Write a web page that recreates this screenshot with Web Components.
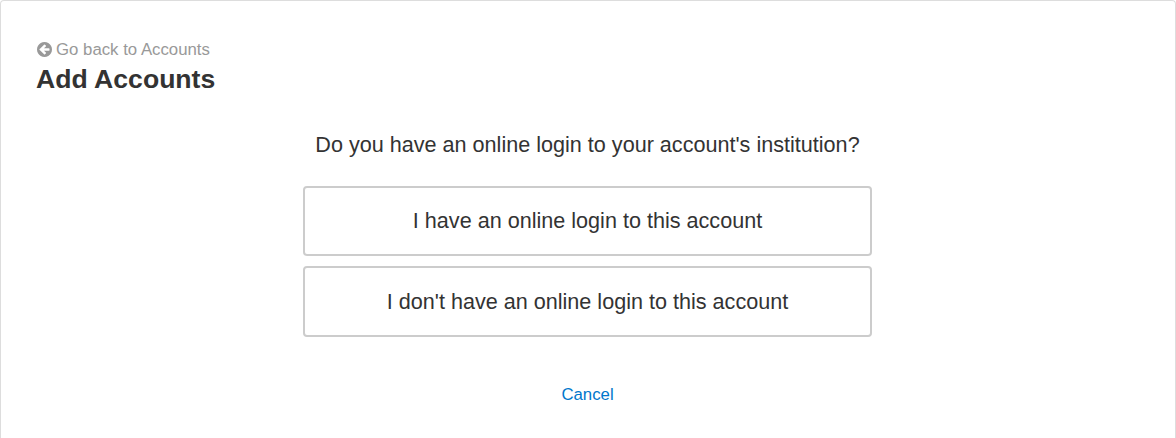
<!DOCTYPE html>
<html>
<head>
<meta charset="utf-8">
<title>Add Accounts</title>
<style>
  html, body { margin: 0; padding: 0; background: #fff; }
  body { font-family: "Liberation Sans", Arial, sans-serif; color: #333; height: 438px; overflow: hidden; }
</style>
</head>
<body>
<add-accounts-card>
  <back-link slot="header">Go back to Accounts</back-link>
  <span slot="title">Add Accounts</span>
  <span slot="question">Do you have an online login to your account's institution?</span>
  <choice-button>I have an online login to this account</choice-button>
  <choice-button>I don't have an online login to this account</choice-button>
  <span slot="cancel">Cancel</span>
</add-accounts-card>

<script>
  class BackLink extends HTMLElement {
    constructor() {
      super();
      this.attachShadow({ mode: 'open' });
      this.shadowRoot.innerHTML = `
        <style>
          :host { display: flex; align-items: center; gap: 4px; height: 18px; padding-left: 1px; font-size: 16.8px; color: #999; }
          svg { width: 15px; height: 15px; display: block; margin-bottom: 1px; }
        </style>
        <svg viewBox="128 128 1536 1536"><path fill="#999" d="M1408 960v-128q0-26-19-45t-45-19h-502l189-189q19-19 19-45t-19-45l-91-91q-18-18-45-18t-45 18l-362 362-91 91q-18 18-18 45t18 45l91 91 362 362q18 18 45 18t45-18l91-91q18-18 18-45t-18-45l-189-189h502q26 0 45-19t19-45zm256-64q0 209-103 385.500t-279.500 279.500-385.500 103-385.500-103-279.500-279.500-103-385.500 103-385.500 279.500-279.500 385.500-103 385.500 103 279.500 279.500 103 385.500z"/></svg>
        <slot></slot>
      `;
    }
  }
  customElements.define('back-link', BackLink);

  class ChoiceButton extends HTMLElement {
    constructor() {
      super();
      this.attachShadow({ mode: 'open' });
      this.shadowRoot.innerHTML = `
        <style>
          :host { display: flex; align-items: center; justify-content: center; box-sizing: border-box; height: 70.4px;
                  border: 2px solid #ccc; border-radius: 4px; background: #fff; font-size: 21.6px; color: #333; cursor: pointer; }
        </style>
        <slot></slot>
      `;
    }
  }
  customElements.define('choice-button', ChoiceButton);

  class AddAccountsCard extends HTMLElement {
    constructor() {
      super();
      this.attachShadow({ mode: 'open' });
      this.shadowRoot.innerHTML = `
        <style>
          :host { display: block; box-sizing: border-box; height: 438px; border: 1px solid #ddd; border-bottom: 0;
                  border-radius: 4px 4px 0 0; padding: 40px 36px 0 35px; background: #fff; }
          .title { font-size: 26.6px; font-weight: bold; line-height: 30px; margin-top: 5px; color: #333; }
          .question { font-size: 21.6px; line-height: 26px; text-align: center; margin-top: 38px; }
          .choices { width: 569px; margin: 28px auto 0; display: flex; flex-direction: column; gap: 10px; }
          .cancel { text-align: center; margin-top: 48px; font-size: 16.8px; line-height: 20px; color: #0077cc; }
        </style>
        <slot name="header"></slot>
        <div class="title"><slot name="title"></slot></div>
        <div class="question"><slot name="question"></slot></div>
        <div class="choices"><slot></slot></div>
        <div class="cancel"><slot name="cancel"></slot></div>
      `;
    }
  }
  customElements.define('add-accounts-card', AddAccountsCard);
</script>
</body>
</html>
